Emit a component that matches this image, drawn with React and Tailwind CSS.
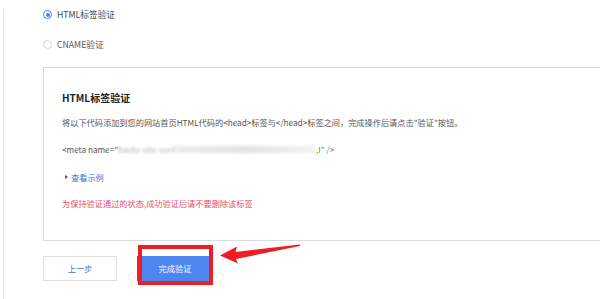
export default function App() {
  return (
    <div className="relative h-[299px] w-[600px] overflow-hidden bg-white font-['Noto_Sans_CJK_SC',sans-serif]">
      <div className="ml-[3px] h-full border-l border-[#e6e6e6] pl-[39px]">
        {/* radio options */}
        <div className="mt-[9px] flex h-[11px] items-center gap-[5px]">
          <span className="flex h-[9px] w-[9px] items-center justify-center rounded-full border border-[#4a7ce0]">
            <span className="h-[4px] w-[4px] rounded-full bg-[#4a7ce0]" />
          </span>
          <span className="text-[8.7px] leading-[11px] text-[#444]">HTML标签验证</span>
        </div>
        <div className="mt-[19px] flex h-[11px] items-center gap-[5px]">
          <span className="h-[9px] w-[9px] rounded-full border border-[#d6d6d6]" />
          <span className="text-[8.7px] leading-[11px] text-[#555]">CNAME验证</span>
        </div>

        {/* instruction panel */}
        <div className="mt-[17px] h-[174px] w-[600px] border border-[#dcdcdc] pl-[18px] pt-[23px]">
          <div className="text-[10px] font-bold leading-[14px] text-[#222]">HTML标签验证</div>
          <div className="mt-[11px] text-[8.2px] leading-[12px] text-[#555]">
            将以下代码添加到您的网站首页HTML代码的&lt;head&gt;标签与&lt;/head&gt;标签之间，完成操作后请点击"验证"按钮。
          </div>
          <div className="mt-[15px] flex items-center text-[8.2px] leading-[12px] text-[#555]">
            <span>&lt;meta name="</span>
            <span className="text-[#b8b8b8] blur-[1px]">baidu-site-verif</span>
            <span className="h-[7px] w-[140px] bg-gradient-to-r from-[#ececec] via-[#e2e2e2] to-[#f2f2f2] blur-[1.5px]" />
            <span className="text-[#777]">,I" /&gt;</span>
          </div>
          <div className="mt-[16px] flex items-center gap-[3px] pl-[3px] text-[8.2px] leading-[12px] text-[#3f6fd8]">
            <span className="h-0 w-0 border-y-[2.5px] border-l-[3px] border-y-transparent border-l-[#555]" />
            <span>查看示例</span>
          </div>
          <div className="mt-[14px] text-[8.2px] leading-[12px] text-[#e4505f]">
            为保持验证通过的状态,成功验证后请不要删除该标签
          </div>
        </div>

        {/* buttons */}
        <div className="mt-[15px] flex gap-[20px]">
          <button className="flex h-[25px] w-[74px] items-center justify-center border border-[#dddddd] bg-white text-[8.2px] text-[#4a72d4]">
            上一步
          </button>
          <button className="flex h-[25px] w-[74px] items-center justify-center border-l-2 border-[#4d66a8] bg-[#4c86ee] text-[8.2px] text-white">
            完成验证
          </button>
        </div>
      </div>

      {/* red annotation */}
      <div className="absolute left-[138px] top-[245px] h-[40px] w-[75px] border-[4px] border-[#ee1d25]" />
      <svg className="absolute left-0 top-0" width="600" height="299" viewBox="0 0 600 299">
        <polygon
          points="220,255.5 237,246.5 235.5,252 300,244.5 300,246 236,259 238,263.5"
          fill="#ee1d25"
        />
      </svg>
    </div>
  );
}
